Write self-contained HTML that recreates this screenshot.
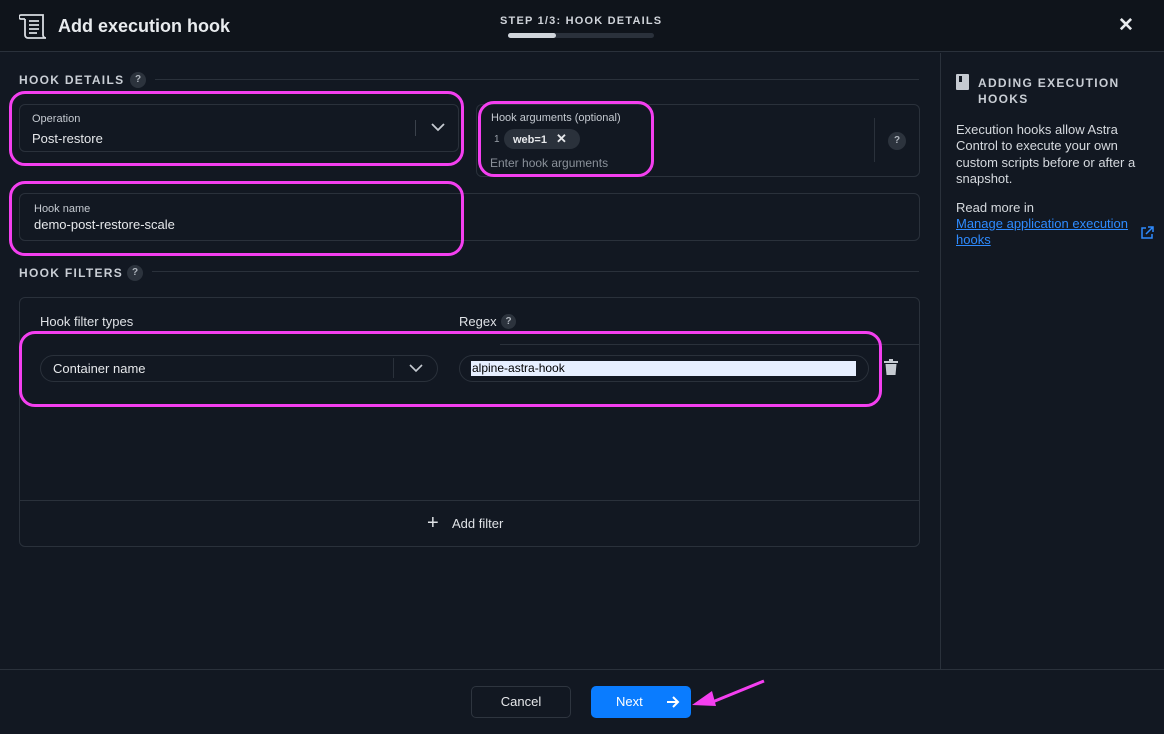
<!DOCTYPE html>
<html><head><meta charset="utf-8"><style>
*{box-sizing:border-box;margin:0;padding:0}
body{width:1164px;height:734px;background:#121822;font-family:"Liberation Sans",sans-serif;color:#e6e8eb;position:relative;overflow:hidden}
.a{position:absolute}
.box{position:absolute;border:1px solid #2a313b;border-radius:6px}
.lbl{font-size:11px;color:#c5cad1}
.val{font-size:13px;color:#e6e8eb}
.sec{font-size:12px;font-weight:bold;letter-spacing:1.3px;color:#c9ced5}
.q{position:absolute;width:16px;height:16px;border-radius:50%;background:#2c333d;color:#aeb4bc;font-size:10px;text-align:center;line-height:16px;font-weight:bold}
.hl{position:absolute;border:3px solid #f43ff0;border-radius:16px}
</style></head><body>
<div class="a" style="left:0;top:0;width:1164px;height:52px;background:#0f141b;border-bottom:1px solid #2a313b"></div>
<svg class="a" style="left:19px;top:13px" width="30" height="26" viewBox="0 0 30 26" fill="none" stroke="#d8dce1" stroke-width="1.8"><path d="M2 2h22v20a3 3 0 0 0 3 3H9a3 3 0 0 1-3-3V6"/><path d="M2 2a2 2 0 0 0 0 4h4"/><path d="M10 8h10M10 12h10M10 16h10M10 20h8"/></svg>
<div class="a" style="left:58px;top:16px;font-size:18px;font-weight:bold;color:#e8ebee">Add execution hook</div>
<div class="a" style="left:500px;top:15px;font-size:11px;font-weight:bold;letter-spacing:1.2px;color:#d0d4da">STEP 1/3: HOOK DETAILS</div>
<div class="a" style="left:508px;top:33px;width:146px;height:5px;border-radius:3px;background:#2a313b"></div>
<div class="a" style="left:508px;top:33px;width:48px;height:5px;border-radius:3px;background:#d0d5db"></div>
<div class="a" style="left:1118px;top:14px;font-size:19px;font-weight:bold;color:#e8ebee">✕</div>

<div class="a" style="left:940px;top:53px;width:1px;height:616px;background:#2a313b"></div>
<div class="a sec" style="left:19px;top:73px">HOOK DETAILS</div>
<div class="q" style="left:130px;top:72px">?</div>
<div class="a" style="left:155px;top:79px;width:764px;height:1px;background:#2a313b"></div>

<div class="box" style="left:19px;top:104px;width:440px;height:48px"></div>
<div class="a lbl" style="left:32px;top:113px">Operation</div>
<div class="a val" style="left:32px;top:131px">Post-restore</div>
<div class="a" style="left:415px;top:120px;width:1px;height:16px;background:#3a414b"></div>
<svg class="a" style="left:431px;top:122px" width="14" height="10" viewBox="0 0 14 10" fill="none" stroke="#c5cad1" stroke-width="1.8"><path d="M1 2l6 6 6-6"/></svg>
<div class="hl" style="left:9px;top:91px;width:455px;height:75px"></div>

<div class="box" style="left:476px;top:104px;width:444px;height:73px"></div>
<div class="a lbl" style="left:491px;top:112px">Hook arguments (optional)</div>
<div class="a" style="left:494px;top:134px;font-size:10px;color:#9aa1aa">1</div>
<div class="a" style="left:504px;top:129px;width:76px;height:20px;border-radius:10px;background:#2a313b;font-size:11px;font-weight:bold;line-height:20px;padding-left:9px">web=1 <span style="margin-left:6px;font-size:13px">✕</span></div>
<div class="a" style="left:490px;top:156px;font-size:12px;color:#8a919a">Enter hook arguments</div>
<div class="a" style="left:874px;top:118px;width:1px;height:44px;background:#2a313b"></div>
<div class="q" style="left:888px;top:132px;width:18px;height:18px;line-height:18px">?</div>
<div class="hl" style="left:478px;top:101px;width:176px;height:76px"></div>

<div class="box" style="left:19px;top:193px;width:901px;height:48px"></div>
<div class="a lbl" style="left:34px;top:203px">Hook name</div>
<div class="a val" style="left:34px;top:217px">demo-post-restore-scale</div>
<div class="hl" style="left:9px;top:181px;width:455px;height:75px"></div>

<div class="a sec" style="left:19px;top:266px">HOOK FILTERS</div>
<div class="q" style="left:127px;top:265px">?</div>
<div class="a" style="left:152px;top:271px;width:767px;height:1px;background:#2a313b"></div>

<div class="box" style="left:19px;top:297px;width:901px;height:250px"></div>
<div class="a" style="left:40px;top:314px;font-size:13px;color:#dfe2e6">Hook filter types</div>
<div class="a" style="left:459px;top:314px;font-size:13px;color:#dfe2e6">Regex</div>
<div class="q" style="left:501px;top:314px;width:15px;height:15px;line-height:15px">?</div>
<div class="a" style="left:500px;top:344px;width:419px;height:1px;background:#2a313b"></div>
<div class="a" style="left:40px;top:355px;width:398px;height:27px;border:1px solid #2a313b;border-radius:14px"></div>
<div class="a val" style="left:53px;top:361px">Container name</div>
<div class="a" style="left:393px;top:358px;width:1px;height:20px;background:#2a313b"></div>
<svg class="a" style="left:409px;top:364px" width="14" height="9" viewBox="0 0 14 9" fill="none" stroke="#c5cad1" stroke-width="1.6"><path d="M1 1l6 6 6-6"/></svg>
<div class="a" style="left:459px;top:355px;width:410px;height:27px;border:1px solid #2a313b;border-radius:14px"></div>
<div class="a" style="left:471px;top:361px;width:385px;height:15px;background:#e6efff"></div>
<div class="a" style="left:472px;top:361px;font-size:12px;color:#000;line-height:15px">alpine-astra-hook</div>
<svg class="a" style="left:884px;top:359px" width="14" height="16" viewBox="0 0 14 16" fill="#c5cad1"><rect x="0" y="2" width="14" height="2"/><rect x="5" y="0" width="4" height="2"/><path d="M1.5 5h11l-1 11h-9z"/></svg>
<div class="hl" style="left:19px;top:331px;width:863px;height:76px"></div>
<div class="a" style="left:20px;top:500px;width:899px;height:1px;background:#2a313b"></div>
<div class="a" style="left:427px;top:512px;font-size:20px;color:#dfe2e6">+</div>
<div class="a" style="left:452px;top:516px;font-size:13px;color:#dfe2e6">Add filter</div>

<svg class="a" style="left:956px;top:74px" width="14" height="16" viewBox="0 0 14 16"><rect x="0" y="0" width="13" height="16" rx="1" fill="#c5cad1"/><rect x="3" y="2" width="3" height="6" fill="#121822"/></svg>
<div class="a sec" style="left:978px;top:75px;line-height:16px">ADDING EXECUTION<br>HOOKS</div>
<div class="a" style="left:956px;top:122px;font-size:13px;line-height:16.3px;color:#d5d9de;white-space:nowrap">Execution hooks allow Astra<br>Control to execute your own<br>custom scripts before or after a<br>snapshot.</div>
<div class="a" style="left:956px;top:200px;font-size:13px;color:#d5d9de">Read more in</div>
<div class="a" style="left:956px;top:216px;font-size:13px;line-height:16.3px;color:#2e8bff;white-space:nowrap;text-decoration:underline">Manage application execution<br>hooks</div>
<svg class="a" style="left:1140px;top:226px" width="14" height="14" viewBox="0 0 14 14" fill="none" stroke="#2e8bff" stroke-width="1.5"><path d="M6 2H2v10h10V8M8 1h5v5M13 1L6 8"/></svg>

<div class="a" style="left:0;top:669px;width:1164px;height:1px;background:#2a313b"></div>
<div class="a" style="left:471px;top:686px;width:100px;height:32px;border:1px solid #2e353f;border-radius:5px;text-align:center;line-height:30px;font-size:13px;color:#e6e8eb">Cancel</div>
<div class="a" style="left:591px;top:686px;width:100px;height:32px;background:#0a7cff;border-radius:5px;font-size:13px;color:#fff;line-height:32px;padding-left:25px">Next</div>
<svg class="a" style="left:666px;top:696px" width="14" height="12" viewBox="0 0 14 12" fill="none" stroke="#fff" stroke-width="2"><path d="M1 6h11M7 1l5 5-5 5"/></svg>
<svg class="a" style="left:690px;top:678px" width="78" height="32" viewBox="0 0 78 32"><path d="M74 3L20 25" stroke="#f43ff0" stroke-width="3"/><path d="M2 27l20-14 4 15z" fill="#f43ff0"/></svg>
</body></html>
